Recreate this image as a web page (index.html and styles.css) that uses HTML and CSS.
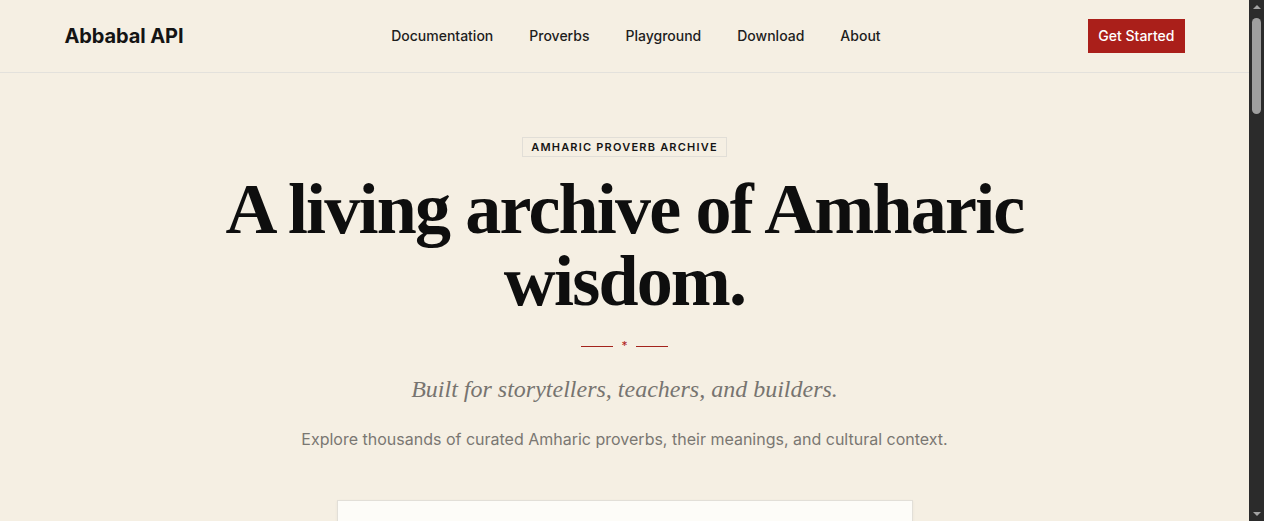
FILE: index.html
```html
<!DOCTYPE html>
<html lang="en">
<head>
<meta charset="utf-8">
<title>Abbabal API</title>
<link rel="stylesheet" href="styles.css">
</head>
<body>
<div class="page">
<header class="site-header">
  <div class="container header-inner">
    <a class="logo" href="#">Abbabal API</a>
    <nav class="nav">
      <a href="#">Documentation</a>
      <a href="#">Proverbs</a>
      <a href="#">Playground</a>
      <a href="#">Download</a>
      <a href="#">About</a>
    </nav>
    <a class="btn-primary" href="#">Get Started</a>
  </div>
</header>
<main class="hero">
  <span class="badge">AMHARIC PROVERB ARCHIVE</span>
  <h1 class="title">A living archive of Amharic wisdom.</h1>
  <div class="divider"><span class="line"></span><span class="star">*</span><span class="line"></span></div>
  <p class="tagline">Built for storytellers, teachers, and builders.</p>
  <p class="lead">Explore thousands of curated Amharic proverbs, their meanings, and cultural context.</p>
  <section class="card"></section>
</main>
</div>
<div class="scrollbar" aria-hidden="true">
  <span class="arrow up"></span>
  <span class="thumb"></span>
  <span class="arrow down"></span>
</div>
</body>
</html>
```
FILE: styles.css
```css
* { box-sizing: border-box; }
html, body { margin: 0; padding: 0; }
body {
  background: #f5efe3;
  color: #111;
  font-family: Inter, "Noto Sans", sans-serif;
}
.page { margin-right: 15px; }
a { text-decoration: none; color: inherit; }
.container { max-width: 1120px; margin: 0 auto; }
.site-header { border-bottom: 1px solid #e3e1dc; }
.header-inner {
  height: 72px;
  display: flex;
  align-items: center;
  justify-content: space-between;
}
.logo { font-size: 20px; font-weight: 700; color: #141414; letter-spacing: -0.1px; margin-top: -1px; }
.nav { display: flex; gap: 36px; font-size: 14px; font-weight: 500; color: #1d1d1d; margin-top: -1px; }
.btn-primary {
  background: #aa1f1a;
  color: #fff;
  font-size: 14px;
  font-weight: 500;
  height: 34px;
  padding: 0 10px;
  display: flex;
  align-items: center;
  margin-top: -1px;
}
.hero {
  display: flex;
  flex-direction: column;
  align-items: center;
  padding-top: 64px;
  padding-bottom: 400px;
}
.badge {
  font-size: 11px;
  font-weight: 600;
  letter-spacing: 0.11em;
  border: 1px solid #e1ded7;
  padding: 3px 8px;
  line-height: 12px;
  color: #151515;
}
.title {
  font-family: "Liberation Serif", "Times New Roman", serif;
  font-weight: 700;
  font-size: 72px;
  line-height: 72px;
  letter-spacing: -0.025em;
  text-align: center;
  max-width: 860px;
  margin: 16px 0 0;
  color: #0e0e0e;
}
.divider { display: flex; align-items: center; gap: 8px; margin-top: 25px; color: #b0241d; }
.divider .line { width: 32px; height: 1px; background: #a3231c; }
.divider .star { font-size: 12px; line-height: 8px; height: 8px; }
.tagline {
  font-family: "Liberation Serif", "Times New Roman", serif;
  font-style: italic;
  font-size: 24px;
  color: #777470;
  margin: 26px 0 0;
}
.lead { font-size: 16px; color: #7a7772; margin: 26px 0 0; }
.card {
  margin-top: 51px;
  width: 576px;
  height: 300px;
  background: #fdfcf8;
  border: 1px solid #e2dfd8;
  box-shadow: 0 1px 3px rgba(0,0,0,0.05);
}
.scrollbar {
  position: fixed;
  top: 0;
  right: 0;
  bottom: 0;
  width: 15px;
  background: #2b2b2b;
  display: flex;
  flex-direction: column;
  align-items: center;
}
.scrollbar .arrow { width: 0; height: 0; border-left: 4px solid transparent; border-right: 4px solid transparent; margin: 5px 0; }
.scrollbar .arrow.up { border-bottom: 4px solid #a3a3a3; margin-bottom: 9px; }
.scrollbar .arrow.down { border-top: 4px solid #a3a3a3; margin-top: auto; }
.scrollbar .thumb { width: 9px; height: 96px; background: #9f9f9f; border-radius: 5px; }
```
